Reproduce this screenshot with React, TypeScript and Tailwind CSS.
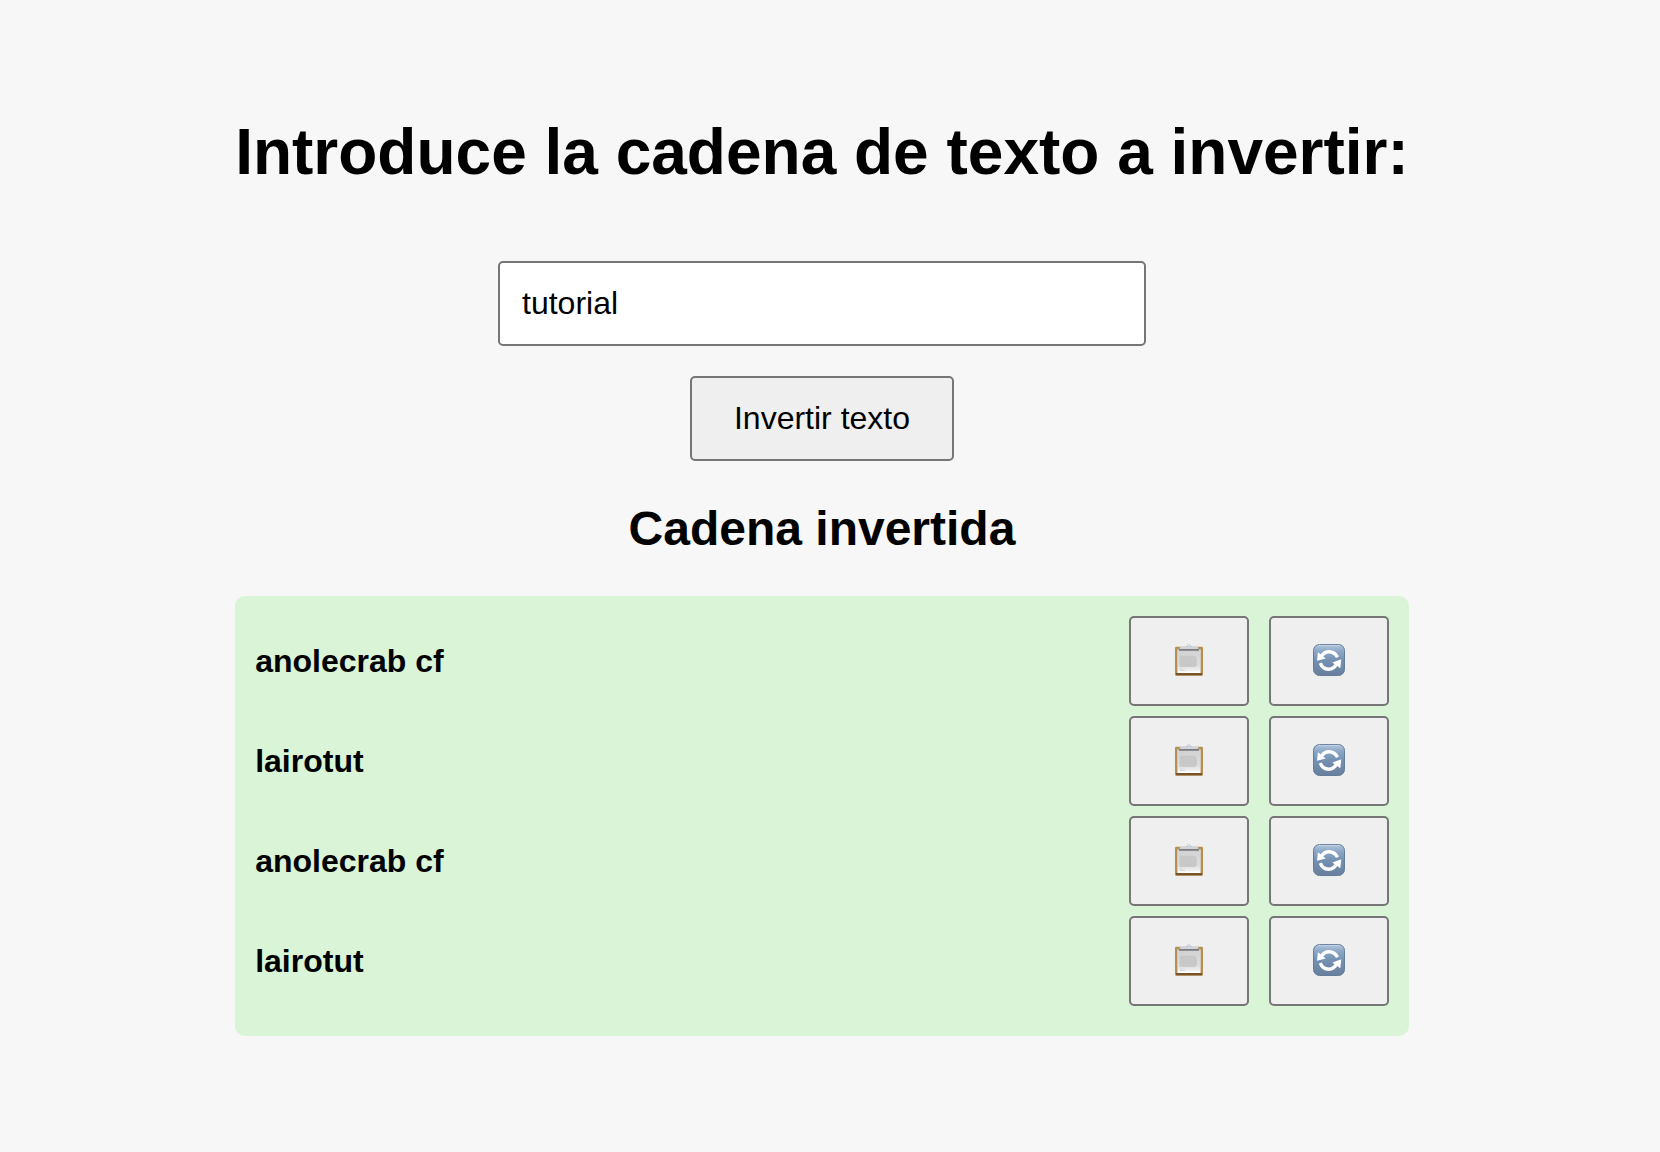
import { useState } from "react";
import type { ReactNode } from "react";

const reverse = (text: string) => text.split("").reverse().join("");

function ClipboardIcon() {
  return (
    <svg viewBox="0 0 32 32" className="size-8" aria-hidden="true">
      <defs>
        <linearGradient id="paper" x1="0" y1="0" x2="0" y2="1">
          <stop offset="0" stopColor="#d2d2d4" />
          <stop offset="0.7" stopColor="#dedede" />
          <stop offset="1" stopColor="#f6f6f6" />
        </linearGradient>
      </defs>
      <rect x="2" y="2.7" width="28" height="29.1" rx="1.2" fill="#b48e52" />
      <path d="M3 29h26v1.5q0 .7-.7.7H3.700q-.7 0-.7-.7z" fill="#7a5228" />
      <rect x="4.300" y="5.500" width="23.400" height="23.500" fill="#e4e1dc" />
      <rect x="5" y="6" width="22" height="22.500" fill="url(#paper)" />
      <path d="M5 28.200h22" stroke="#fff" strokeWidth="1.400" />
      <path d="M7 9.200h3M7 25h3M7 26.500h5" stroke="#c6c6c6" strokeWidth="0.6" />
      <path d="M6.500 11.500h15l2.500 2v7.500l-2 2H6.500z" fill="#cbcbcb" />
      <path
        d="M7 13h15M7 15h16M7 17h15.500M7 19h16M7 21h15.500"
        stroke="#c4c4c4"
        strokeWidth="0.6"
      />
      <path d="M6 5h20v1.800H6z" fill="#7e7d7c" />
      <path d="M6.500 5V4q0-1 1-1h17q1 0 1 1v1z" fill="#bcc5d0" />
      <path d="M7.500 4h17" stroke="#dde4ec" strokeWidth="1" />
      <path d="M13 3 14.600 1.100Q16-.5 17.400 1.100L19 3z" fill="#b9c5d6" />
      <circle cx="16" cy="1.800" r="0.9" fill="#eef0f3" />
    </svg>
  );
}

function RefreshIcon() {
  return (
    <svg viewBox="0 0 32 32" className="size-8" aria-hidden="true">
      <defs>
        <linearGradient id="tile" x1="0" y1="0" x2="0" y2="1">
          <stop offset="0" stopColor="#b4c8dc" />
          <stop offset="0.2" stopColor="#8ea9c9" />
          <stop offset="0.5" stopColor="#7591b2" />
          <stop offset="1" stopColor="#687f9d" />
        </linearGradient>
      </defs>
      <rect x="0.5" y="0.5" width="31" height="31" rx="6" fill="url(#tile)" stroke="#637c9b" />
      <path d="M5.500 1.300h21" stroke="#d7e3ef" strokeWidth="0.8" opacity="0.7" />
      <g fill="none" stroke="#fff" strokeWidth="3.4">
        <path d="M8.300 12.500C11.500 6.300 20.500 5.700 24.500 13.200" />
        <path d="M23.700 19.500C20.500 27 10.500 27.300 7.300 19.200" />
      </g>
      <path d="M4.900 8.300 4 16.700 12.800 14.500z" fill="#fff" />
      <path d="M28.300 15.300 27.300 24.300 19.300 18.400z" fill="#fff" />
    </svg>
  );
}

function IconButton({ label, onClick, children }: { label: string; onClick: () => void; children: ReactNode }) {
  return (
    <button
      type="button"
      aria-label={label}
      onClick={onClick}
      className="flex h-[90px] w-[120px] items-center justify-center rounded-[5px] border-2 border-[#767676] bg-[#efefef] pb-0.5"
    >
      {children}
    </button>
  );
}

export default function App() {
  const [text, setText] = useState("tutorial");
  const [items, setItems] = useState(["anolecrab cf", "lairotut", "anolecrab cf", "lairotut"]);

  return (
    <div className="flex min-h-screen justify-center bg-[#f7f7f7] pr-4 font-['Liberation_Sans',Arial,sans-serif] text-black">
      <main className="flex w-fit flex-col items-center pt-[115px] pb-[116px]">
        <h1 className="text-center text-[64px] leading-[74px] font-bold">
          <label htmlFor="source">Introduce la cadena de texto a invertir:</label>
        </h1>
        <form
          className="mt-[72px] flex w-full flex-col items-center gap-[30px]"
          onSubmit={(e) => {
            e.preventDefault();
            setItems([...items, reverse(text)]);
          }}
        >
          <input
            id="source"
            type="text"
            value={text}
            onChange={(e) => setText(e.target.value)}
            className="h-[85px] w-full max-w-[648px] rounded-[5px] border-2 border-[#767676] bg-white px-[22px] text-[32px]"
          />
          <button
            type="submit"
            className="h-[85px] rounded-[5px] border-2 border-[#767676] bg-[#efefef] px-[42px] pb-0.5 text-[32px]"
          >
            Invertir texto
          </button>
        </form>
        <h2 className="mt-10 text-5xl leading-[55px] font-bold">Cadena invertida</h2>
        <ul className="mt-10 flex w-full flex-col gap-2.5 rounded-[10px] bg-[#d9f4d7] px-5 pt-5 pb-[30px]">
          {items.map((item, i) => (
            <li key={i} className="flex items-center justify-between">
              <span className="text-[32px] leading-9 font-bold">{item}</span>
              <div className="flex gap-5">
                <IconButton label="Copiar" onClick={() => navigator.clipboard?.writeText(item)}>
                  <ClipboardIcon />
                </IconButton>
                <IconButton
                  label="Invertir"
                  onClick={() => setItems(items.map((value, j) => (j === i ? reverse(value) : value)))}
                >
                  <RefreshIcon />
                </IconButton>
              </div>
            </li>
          ))}
        </ul>
      </main>
    </div>
  );
}
